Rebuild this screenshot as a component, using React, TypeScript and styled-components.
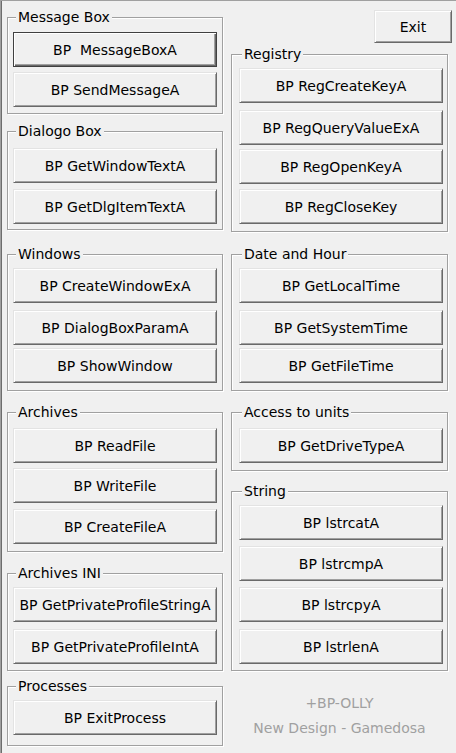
import React from "react";
import styled, { createGlobalStyle } from "styled-components";

const Global = createGlobalStyle`
  html, body { margin: 0; padding: 0; background: #f0f0f0; }
  body { font-family: "DejaVu Sans", "Liberation Sans", sans-serif; }
`;

const Window = styled.div`
  width: 456px;
  height: 753px;
  box-sizing: border-box;
  background: #f0f0f0;
  box-shadow: inset 1px 1px 0 #a0a0a0, inset 2px 0 0 #6d6d6d;
  display: grid;
  grid-template-columns: 216px 225px;
  column-gap: 8px;
  padding-left: 7px;
  font-family: "DejaVu Sans", "Liberation Sans", sans-serif;
  font-size: 14px;
  color: #000;
  overflow: hidden;
`;

const Column = styled.div`
  display: flex;
  flex-direction: column;
  align-items: flex-start;
`;

const Group = styled.div<{ $mt: number; $pb: number; $pl: number; $pr: number; $w: number }>`
  box-sizing: border-box;
  width: ${(p) => p.$w}px;
  margin-top: ${(p) => p.$mt}px;
  padding: 0 ${(p) => p.$pr}px ${(p) => p.$pb}px ${(p) => p.$pl}px;
  border: 1px solid #a0a0a0;
  box-shadow: inset 1px 1px 0 #fff, 1px 1px 0 #fff;
  display: flex;
  flex-direction: column;
`;

const Title = styled.div<{ $ml: number }>`
  width: fit-content;
  margin: -9px 0 0 ${(p) => p.$ml}px;
  padding: 0 2px;
  height: 16px;
  line-height: 16px;
  background: #f0f0f0;
  white-space: nowrap;
`;

const Button = styled.button<{ $mt: number; $default?: boolean; $h?: number }>`
  box-sizing: border-box;
  width: 100%;
  height: ${(p) => p.$h ?? 35}px;
  margin: ${(p) => p.$mt}px 0 0 0;
  padding: 0;
  font-family: "DejaVu Sans", "Liberation Sans", sans-serif;
  font-size: 14px;
  color: #000;
  white-space: pre;
  background: #f0f0f0;
  border-style: solid;
  border-width: 1px;
  border-color: ${(p) => (p.$default ? "#404040" : "#e3e3e3 #696969 #696969 #e3e3e3")};
  box-shadow: ${(p) =>
    p.$default
      ? "inset 1px 1px 0 #fff, inset -1px -1px 0 #696969, inset -2px -2px 0 #a0a0a0"
      : "inset 1px 1px 0 #fff, inset -1px -1px 0 #a0a0a0"};
  cursor: default;
  outline: none;
`;

const ExitButton = styled(Button)`
  width: 78px;
  align-self: flex-end;
  margin-right: 4px;
`;

const Footer = styled.div<{ $mt: number }>`
  width: 217px;
  margin-top: ${(p) => p.$mt}px;
  text-align: center;
  line-height: 25px;
  color: #a0a0a0;
  font-size: 14px;
`;

type Btn = { label: string; mt: number; def?: boolean };
type GroupDef = { title: string; mt: number; pb: number; buttons: Btn[] };

const left: GroupDef[] = [
  {
    title: "Message Box",
    mt: 17,
    pb: 6,
    buttons: [
      { label: "BP  MessageBoxA", mt: 7, def: true },
      { label: "BP SendMessageA", mt: 5 },
    ],
  },
  {
    title: "Dialogo Box",
    mt: 17,
    pb: 5,
    buttons: [
      { label: "BP GetWindowTextA", mt: 9 },
      { label: "BP GetDlgItemTextA", mt: 6 },
    ],
  },
  {
    title: "Windows",
    mt: 24,
    pb: 7,
    buttons: [
      { label: "BP CreateWindowExA", mt: 6 },
      { label: "BP DialogBoxParamA", mt: 7 },
      { label: "BP ShowWindow", mt: 3 },
    ],
  },
  {
    title: "Archives",
    mt: 21,
    pb: 7,
    buttons: [
      { label: "BP ReadFile", mt: 8 },
      { label: "BP WriteFile", mt: 5 },
      { label: "BP CreateFileA", mt: 6 },
    ],
  },
  {
    title: "Archives INI",
    mt: 21,
    pb: 6,
    buttons: [
      { label: "BP GetPrivateProfileStringA", mt: 6 },
      { label: "BP GetPrivateProfileIntA", mt: 7 },
    ],
  },
  {
    title: "Processes",
    mt: 15,
    pb: 10,
    buttons: [{ label: "BP ExitProcess", mt: 6 }],
  },
];

const right: GroupDef[] = [
  {
    title: "Registry",
    mt: 11,
    pb: 7,
    buttons: [
      { label: "BP RegCreateKeyA", mt: 6 },
      { label: "BP RegQueryValueExA", mt: 7 },
      { label: "BP RegOpenKeyA", mt: 4 },
      { label: "BP RegCloseKey", mt: 5 },
    ],
  },
  {
    title: "Date and Hour",
    mt: 22,
    pb: 7,
    buttons: [
      { label: "BP GetLocalTime", mt: 6 },
      { label: "BP GetSystemTime", mt: 7 },
      { label: "BP GetFileTime", mt: 3 },
    ],
  },
  {
    title: "Access to units",
    mt: 21,
    pb: 7,
    buttons: [{ label: "BP GetDriveTypeA", mt: 8 }],
  },
  {
    title: "String",
    mt: 20,
    pb: 6,
    buttons: [
      { label: "BP lstrcatA", mt: 6 },
      { label: "BP lstrcmpA", mt: 6 },
      { label: "BP lstrcpyA", mt: 6 },
      { label: "BP lstrlenA", mt: 7 },
    ],
  },
];

function renderGroup(g: GroupDef, side: "l" | "r") {
  const isLeft = side === "l";
  return (
    <Group
      key={g.title}
      $mt={g.mt}
      $pb={g.pb}
      $w={isLeft ? 216 : 217}
      $pl={isLeft ? 5 : 7}
      $pr={isLeft ? 5 : 4}
    >
      <Title $ml={3}>{g.title}</Title>
      {g.buttons.map((b) => (
        <Button key={b.label} $mt={b.mt} $default={b.def}>
          {b.label}
        </Button>
      ))}
    </Group>
  );
}

export default function App() {
  return (
    <>
      <Global />
      <Window>
        <Column>{left.map((g) => renderGroup(g, "l"))}</Column>
        <Column>
          <ExitButton $mt={10} $h={33}>
            Exit
          </ExitButton>
          {right.map((g) => renderGroup(g, "r"))}
          <Footer $mt={20}>
            +BP-OLLY
            <br />
            New Design - Gamedosa
          </Footer>
        </Column>
      </Window>
    </>
  );
}
